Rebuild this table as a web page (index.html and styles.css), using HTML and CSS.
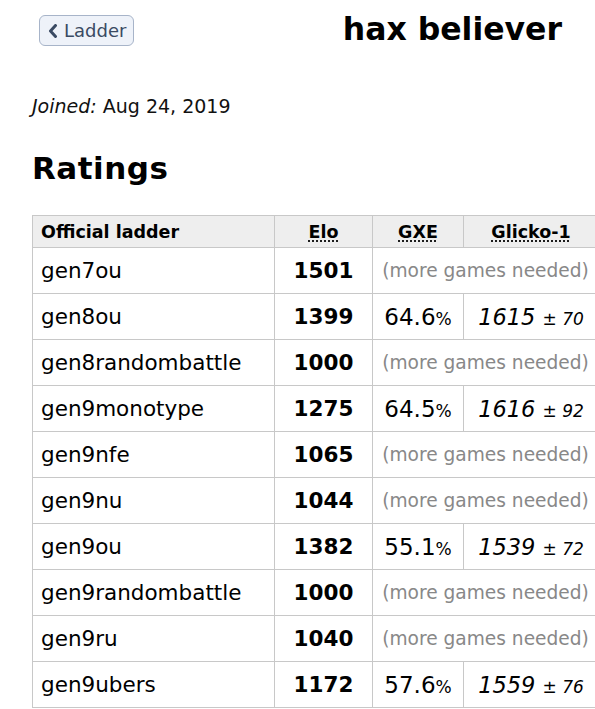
FILE: index.html
```html
<!DOCTYPE html>
<html>
<head>
<meta charset="utf-8">
<link rel="stylesheet" href="styles.css">
</head>
<body>
<div class="page">
  <div class="topbar">
    <button class="back"><svg class="chev" viewBox="0 0 10 14" width="10" height="14"><path d="M7.5 1.5 L2.5 7 L7.5 12.5" fill="none" stroke="currentColor" stroke-width="3" stroke-linecap="round" stroke-linejoin="round"/></svg>Ladder</button>
    <h1 class="name">hax believer</h1>
  </div>
  <p class="joined"><em>Joined:</em> Aug 24, 2019</p>
  <h2 class="ratings-title">Ratings</h2>
  <table class="ratings">
    <thead>
      <tr>
        <th class="c-ladder">Official ladder</th>
        <th class="c-elo"><abbr>Elo</abbr></th>
        <th class="c-gxe"><abbr>GXE</abbr></th>
        <th class="c-glicko"><abbr>Glicko-1</abbr></th>
      </tr>
    </thead>
    <tbody>
      <tr><td>gen7ou</td><td class="elo">1501</td><td colspan="2" class="more">(more games needed)</td></tr>
      <tr><td>gen8ou</td><td class="elo">1399</td><td class="gxe">64.6<small>%</small></td><td class="glicko"><em>1615</em> <small>± <em>70</em></small></td></tr>
      <tr><td>gen8randombattle</td><td class="elo">1000</td><td colspan="2" class="more">(more games needed)</td></tr>
      <tr><td>gen9monotype</td><td class="elo">1275</td><td class="gxe">64.5<small>%</small></td><td class="glicko"><em>1616</em> <small>± <em>92</em></small></td></tr>
      <tr><td>gen9nfe</td><td class="elo">1065</td><td colspan="2" class="more">(more games needed)</td></tr>
      <tr><td>gen9nu</td><td class="elo">1044</td><td colspan="2" class="more">(more games needed)</td></tr>
      <tr><td>gen9ou</td><td class="elo">1382</td><td class="gxe">55.1<small>%</small></td><td class="glicko"><em>1539</em> <small>± <em>72</em></small></td></tr>
      <tr><td>gen9randombattle</td><td class="elo">1000</td><td colspan="2" class="more">(more games needed)</td></tr>
      <tr><td>gen9ru</td><td class="elo">1040</td><td colspan="2" class="more">(more games needed)</td></tr>
      <tr><td>gen9ubers</td><td class="elo">1172</td><td class="gxe">57.6<small>%</small></td><td class="glicko"><em>1559</em> <small>± <em>76</em></small></td></tr>
    </tbody>
  </table>
</div>
</body>
</html>
```

FILE: styles.css
```css
html, body {
  margin: 0;
  padding: 0;
  background: #fff;
}
body {
  font-family: "DejaVu Sans", Verdana, sans-serif;
  color: #000;
  overflow: hidden;
}
.page {
  padding: 15px 0 0 32px;
  width: 567px;
}
.topbar {
  display: flex;
  align-items: flex-start;
  justify-content: space-between;
  padding-left: 7px;
  padding-right: 37px;
}
.back {
  display: flex;
  align-items: center;
  gap: 6px;
  height: 31px;
  padding: 0 7px 0 8px;
  font-family: "DejaVu Sans", Verdana, sans-serif;
  font-size: 18px;
  color: #3a4a63;
  background: #eef2f9;
  border: 1px solid #a7b4c9;
  border-radius: 6px;
}
.chev {
  display: block;
}
.name {
  margin: 0;
  font-size: 31.5px;
  line-height: 28px;
  font-weight: bold;
}
.joined {
  margin: 50px 0 0 0;
  font-size: 19px;
  line-height: 20px;
  color: #111;
}
.ratings-title {
  margin: 32px 0 0 0;
  font-size: 31px;
  line-height: 40px;
  letter-spacing: 0.5px;
}
.ratings {
  margin-top: 27px;
  border-collapse: collapse;
  width: 567px;
  table-layout: fixed;
}
.ratings th, .ratings td {
  border: 1px solid #c8c8c8;
  white-space: nowrap;
}
.ratings th {
  background: #eeeeee;
  font-size: 17.5px;
  height: 31px;
  padding: 0 8px;
  text-align: center;
}
.ratings th.c-ladder {
  text-align: left;
  width: 225px;
}
.c-elo { width: 81px; }
.c-gxe { width: 74px; }
abbr {
  text-decoration: underline dotted;
  text-underline-offset: 3px;
}
.ratings td {
  height: 45px;
  font-size: 21.5px;
  padding: 0 8px;
}
.ratings td.elo {
  text-align: center;
  font-weight: bold;
}
.ratings td.gxe {
  text-align: center;
  font-size: 23px;
  padding: 0;
}
.ratings td.glicko {
  text-align: center;
  font-size: 22.5px;
  padding: 0;
}
.ratings td.more {
  text-align: center;
  color: #888;
  font-size: 18.6px;
  padding: 0;
}
.ratings small {
  font-size: 17px;
}
```
